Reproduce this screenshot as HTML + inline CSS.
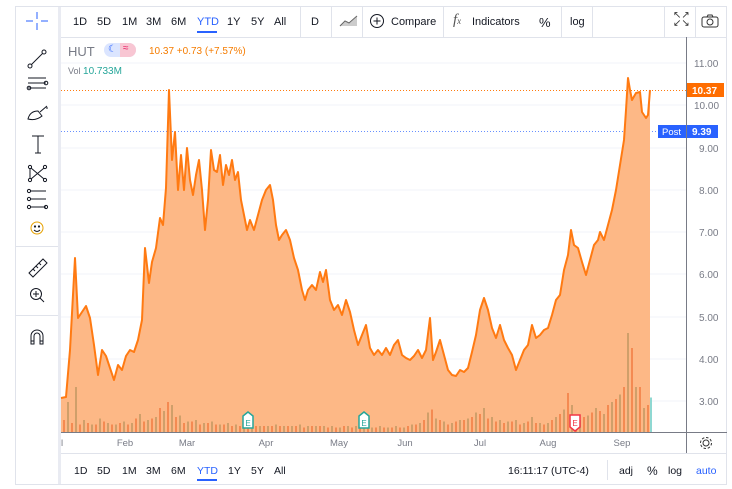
<!DOCTYPE html>
<html><head><meta charset="utf-8"><style>
*{margin:0;padding:0;box-sizing:border-box}
body{width:732px;height:489px;background:#fff;font-family:"Liberation Sans",sans-serif;position:relative;overflow:hidden;color:#131722}
.frame{position:absolute;left:15px;top:6px;width:712px;height:479px;border:1px solid #e0e3eb}
.t{position:absolute;font-size:11px;white-space:nowrap}
.vl{position:absolute;background:#e0e3eb;width:1px}
.hl{position:absolute;background:#e0e3eb;height:1px}
</style></head><body>
<div class="frame"></div>
<div style="position:absolute;left:58px;top:7px;width:3px;height:477px;background:#e9ebf2"></div>
<div class="hl" style="left:16px;top:246px;width:42px"></div>
<div class="hl" style="left:16px;top:315px;width:42px"></div>
<div class="hl" style="left:61px;top:37px;width:666px"></div>
<div class="t" style="left:73px;top:16px">1D</div>
<div class="t" style="left:97px;top:16px">5D</div>
<div class="t" style="left:122px;top:16px">1M</div>
<div class="t" style="left:146px;top:16px">3M</div>
<div class="t" style="left:171px;top:16px">6M</div>
<div class="t" style="left:197px;top:16px;color:#2962ff">YTD</div>
<div style="position:absolute;left:197px;top:31px;width:20px;height:2px;background:#2962ff"></div>
<div class="t" style="left:227px;top:16px">1Y</div>
<div class="t" style="left:251px;top:16px">5Y</div>
<div class="t" style="left:274px;top:16px">All</div>
<div class="vl" style="left:300px;top:7px;height:30px"></div>
<div class="t" style="left:311px;top:16px">D</div>
<div class="vl" style="left:331px;top:7px;height:30px"></div>
<svg style="position:absolute;left:339px;top:15px" width="20" height="12"><path d="M1 11 L6 6 L10 8 L18 1" stroke="#555" fill="none"/><path d="M1 11 L6 6 L10 8 L18 1 L18 11 Z" fill="#999" opacity=".5"/></svg>
<div class="vl" style="left:362px;top:7px;height:30px"></div>
<svg style="position:absolute;left:369px;top:13px" width="16" height="16"><circle cx="8" cy="8" r="6.5" stroke="#131722" fill="none"/><path d="M8 4.5v7M4.5 8h7" stroke="#131722"/></svg>
<div class="t" style="left:391px;top:16px">Compare</div>
<div class="vl" style="left:443px;top:7px;height:30px"></div>
<div class="t" style="left:453px;top:12px;font-family:'Liberation Serif',serif;font-style:italic;font-size:15px;color:#555">f<span style="font-size:9px">x</span></div>
<div class="t" style="left:472px;top:16px">Indicators</div>
<div class="t" style="left:539px;top:15px;font-size:13px">%</div>
<div class="vl" style="left:561px;top:7px;height:30px"></div>
<div class="t" style="left:570px;top:16px">log</div>
<div class="vl" style="left:592px;top:7px;height:30px"></div>
<div class="vl" style="left:664px;top:7px;height:30px"></div>
<div class="vl" style="left:695px;top:7px;height:30px"></div>
<div class="t" style="left:673px;top:12px;font-size:10px;line-height:8px;color:#333">↖↗<br>↙↘</div>
<svg style="position:absolute;left:701px;top:14px" width="18" height="14"><rect x="1" y="3" width="16" height="10" rx="2" stroke="#333" fill="none"/><circle cx="9" cy="8" r="3" stroke="#333" fill="none"/><path d="M6 3 L7 1 H11 L12 3" stroke="#333" fill="none"/></svg>
<svg style="position:absolute;left:16px;top:8px" width="42" height="340" fill="none" stroke="#131722" stroke-width="1">
<path d="M21 4v7M21 15v7M10 13h7M25 13h7" stroke="#2962ff"/>
<circle cx="14" cy="58" r="2"/><circle cx="28" cy="44" r="2"/><path d="M15.5 56.5 L26.5 45.5"/>
<path d="M12 70h18M12 75h18M12 80h18"/><circle cx="30" cy="75" r="1.8"/><circle cx="13" cy="80" r="1.8"/>
<path d="M12 111 Q14 103 22 103 L26 108 Q20 113 12 111Z M24 104 L31 98 M30 100 L32 100"/>
<path d="M22 128v17M16 128h12M19 145h6"/>
<circle cx="14" cy="159" r="1.6"/><circle cx="29" cy="159" r="1.6"/><circle cx="14" cy="172" r="1.6"/><circle cx="29" cy="172" r="1.6"/><path d="M15 160 L28 171 M28 160 L15 171 M14 161v9"/>
<path d="M14 183h16M14 191h16M14 199h16"/><circle cx="13" cy="183" r="1.6"/><circle cx="13" cy="191" r="1.6"/><circle cx="13" cy="199" r="1.6"/><circle cx="30" cy="199" r="1.6"/>
<circle cx="21" cy="220" r="6" stroke="#e6a100"/><circle cx="19" cy="218.5" r=".6"/><circle cx="23" cy="218.5" r=".6"/><path d="M18 222 Q21 225 24 222"/>
<path d="M13 265 L27 251 L31 255 L17 269Z M17 261l2 2M20 258l2 2M23 255l2 2"/>
<circle cx="20" cy="286" r="5.5"/><path d="M24 290 L28 294 M20 283v6M17 286h6"/>
<path d="M15 336v-8a6 6 0 0 1 12 0v8h-3v-8a3 3 0 0 0-6 0v8Z M15 333h3M24 333h3"/>
</svg>
<div class="t" style="left:68px;top:44px;font-size:13px;color:#787b86">HUT</div>
<div style="position:absolute;left:104px;top:43px;width:32px;height:14px;border-radius:7px;background:#dbe5ff"></div>
<div style="position:absolute;left:120px;top:43px;width:16px;height:14px;border-radius:0 7px 7px 0;background:#f8c6d3"></div>
<div class="t" style="left:108px;top:44px;font-size:10px;color:#2962ff">☾</div>
<div class="t" style="left:123px;top:43px;font-size:10px;color:#e91e63">≈</div>
<div class="t" style="left:149px;top:46px;font-size:10px;color:#f57c00">10.37 +0.73 (+7.57%)</div>
<div class="t" style="left:68px;top:66px;font-size:9px;color:#787b86">Vol <span style="color:#26a69a;font-size:10px">10.733M</span></div>
<svg style="position:absolute;left:0;top:0" width="732" height="489">
<g stroke="#f0f3fa" stroke-width="1">
<path d="M61 63H686M61 105H686M61 148H686M61 190H686M61 232H686M61 274H686M61 317H686M61 359H686M61 401H686"/>
</g>
<path d="M61 90.5H686" stroke="#ff7b0f" stroke-dasharray="1 2"/>
<path d="M61 131.5H660" stroke="#2962ff" stroke-dasharray="1 2" opacity=".7"/>
<path d="M61,398 L66,397 L70,350 L75,258 L78,318 L82,312 L86,306 L90,318 L94,345 L98,375 L102,350 L106,356 L110,368 L114,380 L118,365 L122,370 L126,356 L130,350 L134,352 L138,340 L142,320 L145,248 L149,283 L152,262 L156,248 L160,218 L163,225 L166,188 L169,90 L172,160 L175,132 L178,190 L181,155 L184,190 L187,148 L190,180 L193,195 L196,175 L199,160 L202,190 L205,230 L208,200 L211,150 L214,170 L217,172 L220,155 L223,185 L226,165 L229,175 L232,160 L235,180 L238,172 L241,200 L244,215 L247,230 L250,220 L254,230 L258,215 L262,200 L266,190 L270,185 L273,200 L276,225 L279,240 L282,235 L286,230 L290,240 L294,258 L298,270 L302,290 L305,300 L308,290 L312,285 L316,290 L320,272 L323,282 L326,270 L330,300 L334,310 L338,305 L342,315 L346,300 L350,312 L354,330 L358,345 L362,335 L366,325 L370,348 L374,355 L378,350 L382,355 L386,348 L390,355 L394,345 L398,340 L402,355 L406,358 L410,360 L414,356 L418,350 L422,358 L426,350 L430,318 L433,360 L436,352 L440,340 L444,355 L448,370 L452,375 L456,376 L460,370 L464,372 L468,368 L472,352 L476,335 L480,310 L484,298 L488,310 L492,328 L496,338 L500,325 L504,340 L508,348 L512,355 L516,370 L520,360 L524,350 L528,345 L532,325 L536,338 L540,335 L544,330 L548,328 L552,315 L556,300 L560,295 L564,270 L568,255 L571,230 L574,245 L578,248 L582,262 L586,275 L590,260 L594,245 L598,240 L600,232 L604,240 L608,225 L612,210 L616,190 L620,165 L624,140 L626,110 L628,78 L630,90 L632,100 L636,93 L640,92 L642,112 L646,118 L648,115 L650,90 L650,432 L61,432 Z" fill="#fdb886"/>
<path d="M61,398 L66,397 L70,350 L75,258 L78,318 L82,312 L86,306 L90,318 L94,345 L98,375 L102,350 L106,356 L110,368 L114,380 L118,365 L122,370 L126,356 L130,350 L134,352 L138,340 L142,320 L145,248 L149,283 L152,262 L156,248 L160,218 L163,225 L166,188 L169,90 L172,160 L175,132 L178,190 L181,155 L184,190 L187,148 L190,180 L193,195 L196,175 L199,160 L202,190 L205,230 L208,200 L211,150 L214,170 L217,172 L220,155 L223,185 L226,165 L229,175 L232,160 L235,180 L238,172 L241,200 L244,215 L247,230 L250,220 L254,230 L258,215 L262,200 L266,190 L270,185 L273,200 L276,225 L279,240 L282,235 L286,230 L290,240 L294,258 L298,270 L302,290 L305,300 L308,290 L312,285 L316,290 L320,272 L323,282 L326,270 L330,300 L334,310 L338,305 L342,315 L346,300 L350,312 L354,330 L358,345 L362,335 L366,325 L370,348 L374,355 L378,350 L382,355 L386,348 L390,355 L394,345 L398,340 L402,355 L406,358 L410,360 L414,356 L418,350 L422,358 L426,350 L430,318 L433,360 L436,352 L440,340 L444,355 L448,370 L452,375 L456,376 L460,370 L464,372 L468,368 L472,352 L476,335 L480,310 L484,298 L488,310 L492,328 L496,338 L500,325 L504,340 L508,348 L512,355 L516,370 L520,360 L524,350 L528,345 L532,325 L536,338 L540,335 L544,330 L548,328 L552,315 L556,300 L560,295 L564,270 L568,255 L571,230 L574,245 L578,248 L582,262 L586,275 L590,260 L594,245 L598,240 L600,232 L604,240 L608,225 L612,210 L616,190 L620,165 L624,140 L626,110 L628,78 L630,90 L632,100 L636,93 L640,92 L642,112 L646,118 L648,115 L650,90" fill="none" stroke="#ff7a12" stroke-width="2" stroke-linejoin="round"/>
<g stroke-width="2" transform="translate(0,432) scale(1,1.5) translate(0,-432)">
<path stroke="#cf9f6a" d="M68 432v-20M76 432v-30M84 432v-8M92 432v-5M100 432v-9M108 432v-6M116 432v-5M124 432v-7M132 432v-6M140 432v-12M148 432v-8M156 432v-10M164 432v-14M172 432v-18M180 432v-11M188 432v-7M196 432v-8M204 432v-6M212 432v-7M220 432v-5M228 432v-6M236 432v-5M244 432v-4M252 432v-5M260 432v-4M268 432v-4M276 432v-5M284 432v-4M292 432v-4M300 432v-5M308 432v-4M316 432v-4M324 432v-4M332 432v-4M340 432v-3M348 432v-4M356 432v-4M364 432v-3M372 432v-3M380 432v-4M388 432v-3M396 432v-4M404 432v-3M412 432v-5M420 432v-6M428 432v-13M436 432v-9M444 432v-7M452 432v-6M460 432v-8M468 432v-9M476 432v-13M484 432v-16M492 432v-10M500 432v-8M508 432v-7M516 432v-8M524 432v-6M532 432v-10M540 432v-6M548 432v-6M556 432v-10M564 432v-15M572 432v-18M580 432v-8M588 432v-11M596 432v-16M604 432v-12M612 432v-20M620 432v-25M628 432v-66M636 432v-30M644 432v-16"/>
<path stroke="#f48a52" d="M64 432v-8M72 432v-6M80 432v-5M88 432v-6M96 432v-5M104 432v-7M112 432v-5M120 432v-6M128 432v-5M136 432v-9M144 432v-7M152 432v-9M160 432v-16M168 432v-20M176 432v-10M184 432v-6M192 432v-7M200 432v-5M208 432v-6M216 432v-5M224 432v-5M232 432v-4M240 432v-4M248 432v-4M256 432v-4M264 432v-4M272 432v-4M280 432v-4M288 432v-4M296 432v-4M304 432v-3M312 432v-4M320 432v-4M328 432v-3M336 432v-3M344 432v-4M352 432v-3M360 432v-3M368 432v-3M376 432v-3M384 432v-3M392 432v-3M400 432v-3M408 432v-4M416 432v-5M424 432v-8M432 432v-15M440 432v-8M448 432v-5M456 432v-7M464 432v-8M472 432v-10M480 432v-12M488 432v-9M496 432v-7M504 432v-6M512 432v-7M520 432v-5M528 432v-7M536 432v-6M544 432v-5M552 432v-8M560 432v-12M568 432v-26M576 432v-10M584 432v-10M592 432v-13M600 432v-14M608 432v-18M616 432v-22M624 432v-30M632 432v-56M640 432v-30M648 432v-18"/>
<path stroke="#8fd8d2" d="M651 432v-23"/>
</g>
<g font-family="Liberation Sans" font-size="8" text-anchor="middle">
<path d="M243 428v-12l5-4 5 4v12z" fill="#fff" stroke="#26a69a" stroke-width="1.5"/><text x="248" y="426" fill="#26a69a">E</text>
<path d="M359 428v-12l5-4 5 4v12z" fill="#fff" stroke="#26a69a" stroke-width="1.5"/><text x="364" y="426" fill="#26a69a">E</text>
<path d="M570 415v12l5 4 5-4v-12z" fill="#fff" stroke="#f23645" stroke-width="1.5"/><text x="575" y="426" fill="#f23645">E</text>
</g>
<path d="M61 432.5H727M686.5 37V453" stroke="#787b86" stroke-width="1"/>
<path d="M61 453.5H727" stroke="#e0e3eb"/>
<g font-family="Liberation Sans" font-size="10" fill="#787b86">
<text x="694" y="67">11.00</text><text x="694" y="109">10.00</text><text x="699" y="152">9.00</text><text x="699" y="194">8.00</text><text x="699" y="236">7.00</text><text x="699" y="278">6.00</text><text x="699" y="321">5.00</text><text x="699" y="363">4.00</text><text x="699" y="405">3.00</text>
</g>
<rect x="687" y="83" width="37" height="14" fill="#ff6d00"/>
<text x="692" y="94" font-family="Liberation Sans" font-size="10" font-weight="bold" fill="#fff">10.37</text>
<rect x="658" y="125" width="28" height="13" fill="#2962ff"/>
<text x="662" y="135" font-family="Liberation Sans" font-size="9.5" fill="#fff">Post</text>
<rect x="687" y="125" width="31" height="13" fill="#2962ff"/>
<text x="692" y="135" font-family="Liberation Sans" font-size="10" font-weight="bold" fill="#fff">9.39</text>
<g font-family="Liberation Sans" font-size="9.5" fill="#787b86" text-anchor="middle">
<text x="125" y="446">Feb</text><text x="187" y="446">Mar</text><text x="266" y="446">Apr</text><text x="339" y="446">May</text><text x="405" y="446">Jun</text><text x="480" y="446">Jul</text><text x="548" y="446">Aug</text><text x="622" y="446">Sep</text><text x="62" y="446">l</text>
</g>
<g transform="translate(706,443)" fill="none" stroke="#333"><circle r="3"/><circle r="5.5" stroke-dasharray="2.5 1.8"/></g>
</svg>
<div class="t" style="left:74px;top:465px;font-size:10.5px">1D</div>
<div class="t" style="left:97px;top:465px;font-size:10.5px">5D</div>
<div class="t" style="left:122px;top:465px;font-size:10.5px">1M</div>
<div class="t" style="left:146px;top:465px;font-size:10.5px">3M</div>
<div class="t" style="left:171px;top:465px;font-size:10.5px">6M</div>
<div class="t" style="left:197px;top:465px;font-size:10.5px;color:#2962ff">YTD</div>
<div style="position:absolute;left:197px;top:479px;width:20px;height:2px;background:#2962ff"></div>
<div class="t" style="left:228px;top:465px;font-size:10.5px">1Y</div>
<div class="t" style="left:251px;top:465px;font-size:10.5px">5Y</div>
<div class="t" style="left:274px;top:465px;font-size:10.5px">All</div>
<div class="t" style="left:508px;top:465px;font-size:10.5px">16:11:17 (UTC-4)</div>
<div class="vl" style="left:607px;top:460px;height:20px"></div>
<div class="t" style="left:619px;top:465px;font-size:10.5px">adj</div>
<div class="t" style="left:647px;top:464px;font-size:12px">%</div>
<div class="t" style="left:668px;top:465px;font-size:10.5px">log</div>
<div class="t" style="left:696px;top:465px;font-size:10.5px;color:#2962ff">auto</div>
</body></html>
